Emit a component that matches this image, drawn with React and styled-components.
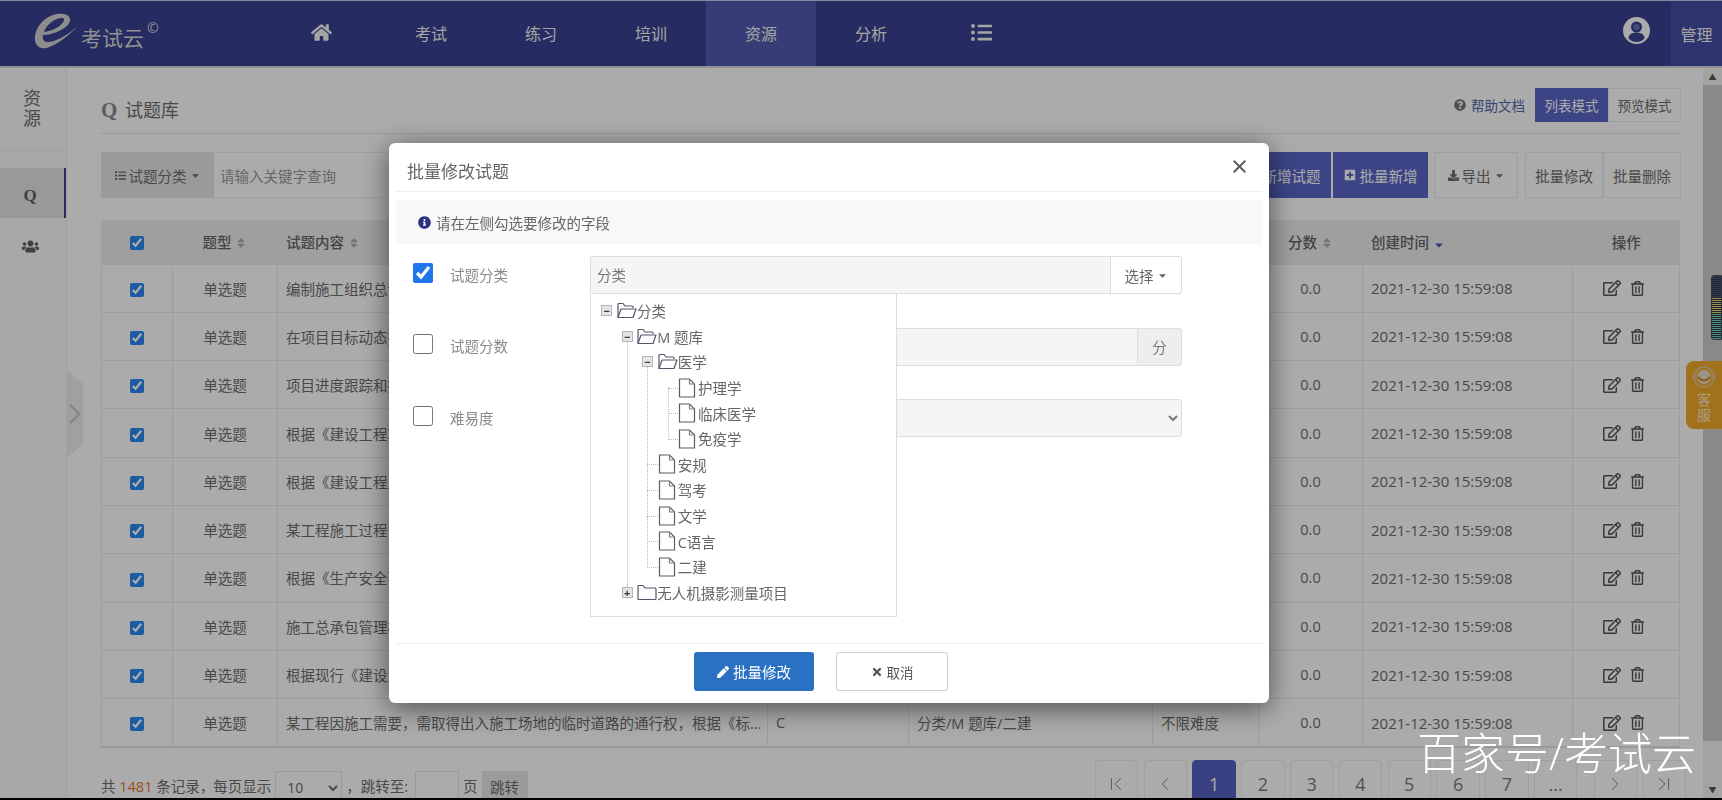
import React from "react";
import styled, { createGlobalStyle } from "styled-components";
import {
  FaHome,
  FaListUl,
  FaUsers,
  FaQuestionCircle,
  FaDownload,
  FaPlusSquare,
  FaRegEdit,
  FaRegTrashAlt,
  FaInfoCircle,
  FaPen,
  FaTimes,
  FaCaretDown,
  FaSort,
  FaList,
} from "react-icons/fa";
import { ChevronFirst, ChevronLast, ChevronLeft, ChevronRight, X } from "lucide-react";

const FONT = `"Open Sans", "Noto Sans CJK SC", sans-serif`;

const navItems = ["考试", "练习", "培训", "资源", "分析"];

const rows = [
  "编制施工组织总设计",
  "在项目目标动态控制",
  "项目进度跟踪和控制",
  "根据《建设工程项目",
  "根据《建设工程监理",
  "某工程施工过程中",
  "根据《生产安全事故",
  "施工总承包管理模式",
  "根据现行《建设工程",
  "某工程因施工需要，需取得出入施工场地的临时道路的通行权，根据《标...",
];

const tree = {
  label: "分类",
  open: true,
  children: [
    {
      label: "M 题库",
      open: true,
      children: [
        {
          label: "医学",
          open: true,
          children: [{ label: "护理学" }, { label: "临床医学" }, { label: "免疫学" }],
        },
        { label: "安规" },
        { label: "驾考" },
        { label: "文学" },
        { label: "C语言" },
        { label: "二建" },
      ],
    },
    { label: "无人机摄影测量项目", folder: true },
  ],
};

const pages = ["1", "2", "3", "4", "5", "6", "7", "..."];

const GlobalStyle = createGlobalStyle`
  html, body {
    margin: 0;
    padding: 0;
    height: 800px;
    overflow: hidden;
    background: #000;
  }
  body, input, select, button {
    font-family: ${FONT};
  }
  * {
    box-sizing: border-box;
  }
`;

const FileIcon = () => (
  <svg width="18" height="20" viewBox="0 0 18 20" fill="none" stroke="#5c5c5c" strokeWidth="1.2">
    <path d="M1.500 1h10l5 5v13h-15z" />
    <path d="M11.500 1v5h5" stroke="#8f7f68" />
  </svg>
);

const FolderOpenIcon = () => (
  <svg width="20" height="17" viewBox="0 0 20 17" fill="none" stroke="#55556a" strokeWidth="1.2">
    <path d="M1 15.500V2.500q0-1 1-1h4l2 2.500h7q1 0 1 1v1" />
    <path d="M1 15.500L4 7h15l-3 8.500z" strokeLinejoin="round" />
  </svg>
);

const FolderIcon = () => (
  <svg width="20" height="17" viewBox="0 0 20 17" fill="none" stroke="#55556a" strokeWidth="1.2">
    <path d="M1 14.500V2.500q0-1 1-1h4l2 2.500h10q1 0 1 1v9.500q0 1-1 1H2q-1 0-1-1z" />
  </svg>
);

const LogoMark = () => (
  <svg width="46" height="38" viewBox="0 0 46 38">
    <path
      fill="#d2d2d2"
      fillRule="evenodd"
      d="M30 1C18-1 3 10 2 24c-1 9 6 13 13 10.500C23 32 33 25 45 13 34 22 25 28 16 29c-5 .6-7-3-6-7 9 0 25-6 27-14 1-4-3-7-7-7zM29 5c3 0 2.500 3 0 5.500-4 4.500-12 8-18 8.500C13 12 22 5 29 5z"
    />
  </svg>
);

const UserIcon = () => (
  <svg width="27" height="27" viewBox="0 0 27 27">
    <circle cx="13.500" cy="13.500" r="13.500" fill="#fff" />
    <circle cx="13.500" cy="10" r="5.500" fill="#394291" />
    <circle cx="13.500" cy="10" r="3" fill="#6a72b8" />
    <path fill="#394291" d="M5.500 21.500q0-6 8-6t8 6q-3.500 3.500-8 3.500t-8-3.500z" />
  </svg>
);

const ServiceIcon = () => (
  <svg width="26" height="26" viewBox="0 0 26 26" fill="none">
    <circle cx="13" cy="12" r="10" stroke="#e0c79a" strokeWidth="1.500" />
    <circle cx="13" cy="12" r="7" fill="#e8dcc6" />
    <path d="M7 12q6 7 12 0" stroke="#c98a1c" strokeWidth="2" />
    <path d="M3 10v5M23 10v5" stroke="#e0c79a" strokeWidth="2.500" />
  </svg>
);

const TreeNode = ({ node, depth }) => {
  const hasChildren = !!node.children;
  const isBranch = hasChildren || node.folder;
  return (
    <li>
      <TreeRow>
        <SwitchSlot $leaf={!isBranch}>
          {isBranch && <SwitchBox>{node.open ? "−" : "+"}</SwitchBox>}
        </SwitchSlot>
        <NodeIcon>
          {!isBranch ? <FileIcon /> : node.open ? <FolderOpenIcon /> : <FolderIcon />}
        </NodeIcon>
        <span>{node.label}</span>
      </TreeRow>
      {hasChildren && (
        <TreeList $guide>
          {node.children.map((child) => (
            <TreeNode key={child.label} node={child} depth={depth + 1} />
          ))}
        </TreeList>
      )}
    </li>
  );
};

const App = () => {
  return (
    <>
      <GlobalStyle />
      <Page>
        <Header>
          <Brand>
            <LogoMark />
            <BrandName>考试云</BrandName>
            <BrandMark>©</BrandMark>
          </Brand>
          <Nav>
            <NavItem>
              <FaHome size={21} />
            </NavItem>
            {navItems.map((item) => (
              <NavItem key={item} $active={item === "资源"}>
                {item}
              </NavItem>
            ))}
            <NavItem>
              <FaListUl size={21} />
            </NavItem>
          </Nav>
          <UserArea>
            <UserIcon />
          </UserArea>
          <AdminTab>管理</AdminTab>
        </Header>

        <Main>
          <Sidebar>
            <SideTitle>
              资<br />源
            </SideTitle>
            <SideItem $active>
              <QMark>Q</QMark>
            </SideItem>
            <SideItem>
              <FaUsers size={17} />
            </SideItem>
          </Sidebar>
          <CollapseTab>
            <ChevronRight size={34} strokeWidth={1.5} />
          </CollapseTab>

          <Content>
            <TitleBar>
              <PageTitle>
                <TitleQ>Q</TitleQ> 试题库
              </PageTitle>
              <HelpLink>
                <FaQuestionCircle size={12} /> 帮助文档
              </HelpLink>
              <ModeButton $active>列表模式</ModeButton>
              <ModeButton>预览模式</ModeButton>
            </TitleBar>

            <Toolbar>
              <CategoryPicker>
                <FaList size={11} /> 试题分类 <FaCaretDown size={11} />
              </CategoryPicker>
              <SearchBox>请输入关键字查询</SearchBox>
              <PrimaryButton>
                <FaPlusSquare size={12} /> 新增试题
              </PrimaryButton>
              <PrimaryButton>
                <FaPlusSquare size={12} /> 批量新增
              </PrimaryButton>
              <GhostButton $width={84} $gap={6}>
                <FaDownload size={11} /> 导出 <FaCaretDown size={11} />
              </GhostButton>
              <GhostButton $width={78} $gap={7}>批量修改</GhostButton>
              <GhostButton $width={78}>批量删除</GhostButton>
            </Toolbar>

            <Table>
              <colgroup>
                <col width="71" />
                <col width="105" />
                <col width="490" />
                <col width="141" />
                <col width="244" />
                <col width="106" />
                <col width="104" />
                <col width="210" />
                <col width="107" />
              </colgroup>
              <thead>
                <tr>
                  <th>
                    <RowCheck type="checkbox" checked readOnly />
                  </th>
                  <th>
                    题型 <SortIcon />
                  </th>
                  <LeftHead>
                    试题内容 <SortIcon />
                  </LeftHead>
                  <th />
                  <th />
                  <th />
                  <th>
                    分数 <SortIcon />
                  </th>
                  <LeftHead>
                    创建时间 <SortActive />
                  </LeftHead>
                  <th>操作</th>
                </tr>
              </thead>
              <tbody>
                {rows.map((text, i) => (
                  <tr key={i}>
                    <td>
                      <RowCheck type="checkbox" checked readOnly />
                    </td>
                    <td>单选题</td>
                    <LeftCell>{text}</LeftCell>
                    <LeftCell>{i === 9 ? "C" : ""}</LeftCell>
                    <LeftCell>{i === 9 ? "分类/M 题库/二建" : ""}</LeftCell>
                    <LeftCell>{i === 9 ? "不限难度" : ""}</LeftCell>
                    <td>0.0</td>
                    <DateCell>2021-12-30 15:59:08</DateCell>
                    <td>
                      <ActionIcons>
                        <FaRegEdit size={18} />
                        <FaRegTrashAlt size={15} />
                      </ActionIcons>
                    </td>
                  </tr>
                ))}
              </tbody>
            </Table>

            <Footer>
              <RecordInfo>
                <RecordCount>
                  共 <Count>1481</Count> 条记录，
                </RecordCount>
                <span>每页显示</span>
                <PageSize defaultValue="10">
                  <option>10</option>
                </PageSize>
                <span>，跳转至:</span>
                <JumpInput />
                <span>页</span>
                <JumpButton>跳转</JumpButton>
              </RecordInfo>
              <Pager>
                <PageBox>
                  <ChevronFirst size={22} strokeWidth={1} />
                </PageBox>
                <PageBox>
                  <ChevronLeft size={22} strokeWidth={1} />
                </PageBox>
                {pages.map((p) => (
                  <PageBox key={p} $active={p === "1"}>
                    {p}
                  </PageBox>
                ))}
                <PageBox $push>
                  <ChevronRight size={22} strokeWidth={1} />
                </PageBox>
                <PageBox>
                  <ChevronLast size={22} strokeWidth={1} />
                </PageBox>
              </Pager>
            </Footer>
          </Content>

          <ScrollBar>
            <ScrollArrow>▲</ScrollArrow>
            <ScrollThumb />
            <ScrollArrow>▼</ScrollArrow>
          </ScrollBar>
          <Meter />
          <ServiceTab>
            <ServiceIcon />
            <span>
              客<br />服
            </span>
          </ServiceTab>
        </Main>
      </Page>

      <Overlay />

      <Modal>
        <ModalHeader>
          <ModalTitle>批量修改试题</ModalTitle>
          <CloseButton>
            <X size={21} strokeWidth={2.2} />
          </CloseButton>
        </ModalHeader>
        <Notice>
          <FaInfoCircle size={13} color="#2a3180" /> 请在左侧勾选要修改的字段
        </Notice>
        <Form>
          <FormRow>
            <FieldCheck type="checkbox" checked readOnly />
            <FieldLabel>试题分类</FieldLabel>
            <FieldControl>
              <FieldValue>分类</FieldValue>
              <PickButton>
                选择 <FaCaretDown size={11} />
              </PickButton>
              <TreeMenu>
                <TreeList>
                  <TreeNode node={tree} depth={0} />
                </TreeList>
              </TreeMenu>
            </FieldControl>
          </FormRow>
          <FormRow>
            <FieldCheck type="checkbox" readOnly />
            <FieldLabel>试题分数</FieldLabel>
            <FieldControl>
              <FieldValue />
              <Addon>分</Addon>
            </FieldControl>
          </FormRow>
          <FormRow>
            <FieldCheck type="checkbox" readOnly />
            <FieldLabel>难易度</FieldLabel>
            <FieldControl>
              <DifficultySelect defaultValue="不限难度">
                <option>不限难度</option>
              </DifficultySelect>
            </FieldControl>
          </FormRow>
        </Form>
        <ModalFooter>
          <SubmitButton>
            <FaPen size={12} /> 批量修改
          </SubmitButton>
          <CancelButton>
            <FaTimes size={12} /> 取消
          </CancelButton>
        </ModalFooter>
      </Modal>

      <Watermark>百家号/考试云</Watermark>
    </>
  );
};

const Page = styled.div`
  width: 1722px;
  height: 798px;
  display: flex;
  flex-direction: column;
  background: #fff;
  color: #6d6d6d;
  font-size: 14.500px;
  overflow: hidden;
`;

const Header = styled.header`
  flex: none;
  height: 68px;
  display: flex;
  align-items: stretch;
  background: #394291;
  border-top: 1px solid #c8d0e8;
  border-bottom: 2px solid #d8d8d8;
  color: #f5f5f5;
`;

const Brand = styled.div`
  width: 266px;
  padding: 12px 0 0 33px;
  display: flex;
  align-items: flex-start;
`;

const BrandName = styled.span`
  margin: 9px 0 0 2px;
  font-size: 21px;
  color: #d8d8d8;
`;

const BrandMark = styled.span`
  margin: 5px 0 0 3px;
  font-size: 14px;
  color: #d8d8d8;
`;

const Nav = styled.nav`
  display: flex;
`;

const NavItem = styled.div`
  width: 110px;
  display: flex;
  align-items: center;
  justify-content: center;
  font-size: 16px;
  background: ${(props) => (props.$active ? "#515aaf" : "transparent")};
  padding-bottom: 2px;
`;

const UserArea = styled.div`
  margin-left: auto;
  width: 50px;
  padding: 16px 0 0 2px;
`;

const AdminTab = styled.div`
  width: 51px;
  display: flex;
  align-items: center;
  justify-content: center;
  font-size: 16px;
  background: #454ea3;
`;

const Main = styled.main`
  position: relative;
  flex: 1;
  min-height: 0;
  display: flex;
  overflow: hidden;
`;

const Sidebar = styled.aside`
  flex: none;
  width: 67px;
  border-right: 1px solid #f0f0f0;
  background: #fbfbfb;
  color: #5f5f5f;
`;

const SideTitle = styled.div`
  height: 83px;
  padding: 20px 2px 0 0;
  text-align: center;
  font-size: 18px;
  line-height: 20px;
  border-bottom: 1px solid #eee;
  margin-bottom: 17px;
  color: #6d6d6d;
`;

const SideItem = styled.div`
  height: 50px;
  padding: 6px 4px 0 0;
  display: flex;
  align-items: center;
  justify-content: center;
  background: ${(props) => (props.$active ? "#e4e4e4" : "transparent")};
  border-right: 2px solid ${(props) => (props.$active ? "#394291" : "transparent")};
`;

const QMark = styled.span`
  font-family: "Liberation Serif", serif;
  font-weight: 700;
  font-size: 17px;
`;

const CollapseTab = styled.div`
  position: absolute;
  left: 67px;
  top: 302px;
  width: 16px;
  height: 88px;
  display: flex;
  align-items: center;
  justify-content: center;
  color: #c4c4c4;
  background: #efefef;
  clip-path: polygon(0 0, 100% 16%, 100% 84%, 0 100%);

  & svg {
    flex: none;
  }
`;

const Content = styled.section`
  flex: 1;
  min-width: 0;
  padding: 0 22px 0 34px;
`;

const TitleBar = styled.div`
  height: 66px;
  display: flex;
  align-items: center;
  padding-top: 8px;
  border-bottom: 1px solid #e6e6e6;
  font-size: 13.500px;
`;

const PageTitle = styled.h1`
  margin: 10px auto 0 0;
  font-size: 18px;
  font-weight: 400;
  color: #6d6d6d;
`;

const TitleQ = styled.span`
  margin-right: 3px;
  font-family: "Liberation Serif", serif;
  font-weight: 700;
  font-size: 21px;
  color: #8a8a8a;
`;

const HelpLink = styled.span`
  display: flex;
  align-items: center;
  gap: 5px;
  margin-right: 10px;
  color: #4f6aa8;

  & svg {
    color: #777;
  }
`;

const ModeButton = styled.span`
  width: 73px;
  height: 34px;
  display: flex;
  align-items: center;
  justify-content: center;
  color: ${(props) => (props.$active ? "#fff" : "#6d6d6d")};
  background: ${(props) => (props.$active ? "#5a66c8" : "#fff")};
  border: 1px solid ${(props) => (props.$active ? "#5a66c8" : "#eee")};
`;

const Toolbar = styled.div`
  margin-top: 18px;
  height: 46px;
  display: flex;
  align-items: stretch;
`;

const CategoryPicker = styled.div`
  width: 113px;
  display: flex;
  align-items: center;
  justify-content: center;
  gap: 3px;
  background: #e6e6e6;
  font-size: 14.500px;
`;

const SearchBox = styled.div`
  flex: 1;
  display: flex;
  align-items: center;
  padding-left: 6px;
  margin-right: 2px;
  background: #fff;
  border: 1px solid #eee;
  border-left: 0;
  color: #999;
  font-size: 14.500px;
`;

const PrimaryButton = styled.div`
  width: 95px;
  margin-left: 2px;
  display: flex;
  align-items: center;
  justify-content: center;
  gap: 4px;
  color: #fff;
  background: #5a66c8;
`;

const GhostButton = styled.div`
  width: ${(props) => props.$width}px;
  margin-left: ${(props) => props.$gap || 0}px;
  display: flex;
  align-items: center;
  justify-content: center;
  gap: 3px;
  background: #fff;
  border: 1px solid #eee;
`;

const Table = styled.table`
  margin-top: 22px;
  width: 1578px;
  table-layout: fixed;
  border-collapse: collapse;
  border-bottom: 2px solid #e4e4e4;

  & th {
    height: 44px;
    padding: 0 8px;
    font-weight: 500;
    font-size: 14.500px;
    background: #eeeeee;
    border-left: 1px solid #f0f0f0;
    text-align: center;
    color: #666;
  }

  & td {
    height: 48.300px;
    padding: 0 8px;
    border: 1px solid #eaeaea;
    text-align: center;
    white-space: nowrap;
    overflow: hidden;
  }
`;

const LeftHead = styled.th`
  && {
    text-align: left;
  }
`;

const LeftCell = styled.td`
  && {
    text-align: left;
  }
`;

const DateCell = styled(LeftCell)`
  font-size: 15px;
`;

const RowCheck = styled.input`
  width: 14px;
  height: 14px;
  margin: 0;
  accent-color: #2b87f0;
  vertical-align: middle;
`;

const SortIcon = styled(FaSort)`
  color: #aaa;
  font-size: 12px;
  vertical-align: -1px;
`;

const SortActive = styled(FaCaretDown)`
  color: #3f5fb8;
  font-size: 12px;
  vertical-align: -3px;
`;

const ActionIcons = styled.div`
  margin-left: -4px;
  display: flex;
  align-items: center;
  justify-content: center;
  gap: 9px;
  color: #555;
`;

const Footer = styled.div`
  margin-top: 12px;
  display: flex;
  align-items: flex-start;
  justify-content: space-between;
`;

const RecordInfo = styled.div`
  margin-top: 11px;
  height: 34px;
  display: flex;
  align-items: center;
  gap: 4px;
  font-size: 14.500px;

  & > span {
    padding-bottom: 5px;
  }
`;

const RecordCount = styled.span`
  margin-right: -5px;
`;

const Count = styled.span`
  color: #e67a2e;
`;

const PageSize = styled.select`
  width: 67px;
  height: 34px;
  padding-left: 7px;
  border: 1px solid #e6e6e6;
  background: #fff;
  color: #6d6d6d;
  font-size: 14px;
`;

const JumpInput = styled.div`
  width: 44px;
  height: 34px;
  margin-left: 3px;
  border: 1px solid #e6e6e6;
`;

const JumpButton = styled.div`
  width: 46px;
  height: 34px;
  padding-bottom: 3px;
  display: flex;
  align-items: center;
  justify-content: center;
  background: #e8e8e8;
`;

const Pager = styled.div`
  display: flex;
  gap: 5.300px;
  margin-right: -5px;
`;

const PageBox = styled.div`
  width: 43.500px;
  height: 46px;
  margin-left: ${(props) => (props.$push ? "11px" : "0")};
  padding-top: 2px;
  display: flex;
  align-items: center;
  justify-content: center;
  font-size: 18px;
  color: ${(props) => (props.$active ? "#fff" : "#7a7a7a")};
  background: ${(props) => (props.$active ? "#5560c0" : "#fff")};
  border: 1px solid ${(props) => (props.$active ? "#5560c0" : "#ededed")};
  border-radius: 4px;
`;

const ScrollBar = styled.div`
  flex: none;
  width: 19px;
  display: flex;
  flex-direction: column;
  align-items: stretch;
  background: #f4f4f4;
`;

const ScrollArrow = styled.div`
  height: 17px;
  display: flex;
  align-items: center;
  justify-content: center;
  font-size: 8px;
  color: #555;
`;

const ScrollThumb = styled.div`
  flex: 1;
  background: #cdcdcd;
  margin-bottom: 40px;
`;

const Meter = styled.div`
  position: absolute;
  right: 0;
  top: 207px;
  width: 11px;
  height: 65px;
  border-radius: 3px 0 0 3px;
  border: 1px solid #3f4a5e;
  background: repeating-linear-gradient(#0000 0 1px, #2a344a 1px 2px),
    linear-gradient(#4c5a78 0 35%, #e8d870 35% 60%, #78d8b0 60%);
`;

const ServiceTab = styled.div`
  position: absolute;
  right: 0;
  top: 293px;
  width: 36px;
  height: 68px;
  padding-top: 4px;
  display: flex;
  flex-direction: column;
  align-items: center;
  border-radius: 8px 0 0 8px;
  background: #f0a92a;
  color: #fde9c4;
  font-size: 14px;
  line-height: 15px;
  text-align: center;

  & span {
    margin-top: 1px;
  }
`;

const Overlay = styled.div`
  position: fixed;
  inset: 0 0 2px 0;
  background: rgba(0, 0, 0, 0.33);
`;

const Modal = styled.div`
  position: fixed;
  left: 389px;
  top: 143px;
  width: 880px;
  height: 560px;
  padding: 0 7px;
  display: flex;
  flex-direction: column;
  background: #fff;
  border-radius: 6px;
  box-shadow: 0 5px 28px rgba(0, 0, 0, 0.55);
  color: #777;
  font-size: 14.500px;
`;

const ModalHeader = styled.div`
  flex: none;
  height: 49px;
  display: flex;
  align-items: center;
  justify-content: space-between;
  padding: 2px 12px 0 11px;
  border-bottom: 1px solid #eee;
`;

const ModalTitle = styled.h2`
  margin: 4px 0 0;
  font-size: 17px;
  font-weight: 400;
  color: #666;
`;

const CloseButton = styled.span`
  display: flex;
  color: #5c5c5c;
  margin-top: -4px;
`;

const Notice = styled.div`
  flex: none;
  margin-top: 8px;
  height: 44px;
  display: flex;
  align-items: center;
  gap: 5px;
  padding-left: 22px;
  background: #f8f8f8;
  font-size: 14.500px;
  color: #666;
`;

const Form = styled.div`
  flex: 1;
  padding: 12px 0 0 17px;
  display: flex;
  flex-direction: column;
  gap: 33.500px;
`;

const FormRow = styled.div`
  height: 38px;
  display: flex;
  align-items: center;
`;

const FieldCheck = styled.input`
  width: 20px;
  height: 20px;
  margin: 0 17px 5px 0;
  accent-color: #1f75ec;
`;

const FieldLabel = styled.label`
  width: 140px;
  padding-bottom: 2px;
  color: #8a8a8a;
`;

const FieldControl = styled.div`
  position: relative;
  width: 592px;
  height: 38px;
  display: flex;
`;

const FieldValue = styled.div`
  flex: 1;
  display: flex;
  align-items: center;
  padding: 0 0 2px 6px;
  background: #f5f5f5;
  border: 1px solid #ddd;
  border-radius: 3px 0 0 3px;
  color: #777;
`;

const PickButton = styled.div`
  width: 71px;
  display: flex;
  align-items: center;
  justify-content: center;
  gap: 3px;
  background: #fff;
  border: 1px solid #ddd;
  border-left: 0;
  border-radius: 0 3px 3px 0;
  color: #666;
`;

const Addon = styled.div`
  width: 44px;
  display: flex;
  align-items: center;
  justify-content: center;
  background: #eee;
  border: 1px solid #ddd;
  border-left: 0;
  border-radius: 0 3px 3px 0;
`;

const DifficultySelect = styled.select`
  width: 100%;
  height: 38px;
  padding-left: 2px;
  background: #f5f5f5;
  border: 1px solid #ddd;
  border-radius: 3px;
  color: #777;
  font-size: 14.500px;
`;

const TreeMenu = styled.div`
  position: absolute;
  z-index: 2;
  left: 0;
  top: 38px;
  width: 307px;
  height: 323px;
  padding: 4px 0 0 5.500px;
  background: #fff;
  border: 1px solid #ddd;
  border-top: 0;
  color: #666;
  font-size: 14.500px;
`;

const TreeList = styled.ul`
  position: relative;
  margin: 0 0 0 ${(props) => (props.$guide ? "20.400px" : "0")};
  padding: 0;
  list-style: none;

  ${(props) =>
    props.$guide &&
    `
    &::before {
      content: "";
      position: absolute;
      left: 10px;
      top: 12px;
      bottom: 12px;
      border-left: 1px dotted #bbb;
    }
  `}
`;

const TreeRow = styled.div`
  position: relative;
  height: 25.600px;
  display: flex;
  align-items: center;
  white-space: nowrap;
`;

const SwitchSlot = styled.span`
  position: relative;
  flex: none;
  width: 20.400px;
  height: 100%;
  display: flex;
  align-items: center;
  justify-content: center;

  ${(props) =>
    props.$leaf &&
    `
    &::after {
      content: "";
      position: absolute;
      left: 10px;
      right: 0;
      top: 50%;
      border-top: 1px dotted #bbb;
    }
  `}
`;

const SwitchBox = styled.span`
  position: relative;
  z-index: 1;
  width: 11px;
  height: 11px;
  display: flex;
  align-items: center;
  justify-content: center;
  background: #e4e4e4;
  border: 1px solid #b5b5b5;
  color: #333;
  font-size: 11px;
  font-weight: 700;
  line-height: 1;
`;

const NodeIcon = styled.span`
  flex: none;
  width: 20px;
  display: flex;
  align-items: center;
`;

const ModalFooter = styled.div`
  flex: none;
  height: 60px;
  display: flex;
  gap: 22px;
  padding: 8px 0 0 298px;
  border-top: 1px solid #eee;
`;

const SubmitButton = styled.div`
  width: 120px;
  height: 39px;
  display: flex;
  align-items: center;
  justify-content: center;
  gap: 4px;
  color: #fff;
  background: #2a70c3;
  border-radius: 3px;
  font-size: 14.500px;
`;

const CancelButton = styled.div`
  width: 112px;
  height: 39px;
  display: flex;
  align-items: center;
  justify-content: center;
  gap: 4px;
  color: #555;
  background: #fff;
  border: 1px solid #ccc;
  border-radius: 3px;
  font-size: 13.500px;
`;

const Watermark = styled.div`
  position: fixed;
  right: 26px;
  top: 723px;
  font-size: 44px;
  font-weight: 300;
  line-height: 60px;
  white-space: nowrap;
  color: #fff;
`;

export default App;
